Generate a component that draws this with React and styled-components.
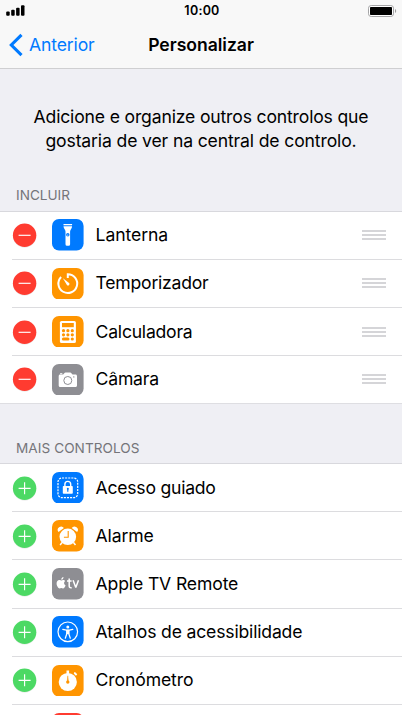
import React from "react";
import styled, { createGlobalStyle } from "styled-components";

const Global = createGlobalStyle`
  * { box-sizing: border-box; }
  html, body { margin: 0; height: 100%; overflow: hidden; background: #efeff4; }
`;

const Screen = styled.main`
  width: 402px;
  height: 715px;
  overflow: hidden;
  background: #efeff4;
  color: #000;
  font-family: Inter, "Liberation Sans", sans-serif;
`;

const Header = styled.header`
  height: 69px;
  background: #f8f8f8;
  border-bottom: 1px solid #cfcfd1;
`;

const StatusBar = styled.div`
  height: 22px;
  display: grid;
  grid-template-columns: 1fr auto 1fr;
  align-items: center;
  padding: 0 5px 0 6px;
`;

const Clock = styled.span`
  padding-left: 1px;
  font-size: 12.5px;
  line-height: 22px;
  font-weight: 600;
  letter-spacing: 0.25px;
`;

const Battery = styled.svg`
  justify-self: end;
`;

const NavBar = styled.nav`
  height: 46px;
  display: grid;
  grid-template-columns: 1fr auto 1fr;
  align-items: center;
  padding: 0 9px;
`;

const BackButton = styled.button`
  display: flex;
  align-items: center;
  gap: 6px;
  padding: 0;
  border: 0;
  background: none;
  color: #007aff;
  font: 400 17.6px/24px Inter, "Liberation Sans", sans-serif;
  letter-spacing: -0.15px;
`;

const Title = styled.h1`
  margin: 0;
  font-size: 17.6px;
  line-height: 24px;
  font-weight: 600;
  letter-spacing: -0.03px;
`;

const Intro = styled.p`
  margin: 0;
  padding-top: 36px;
  height: 111px;
  text-align: center;
  font-size: 17.6px;
  line-height: 23.6px;
`;

const Line = styled.span`
  display: block;
  white-space: nowrap;
  letter-spacing: ${(p) => p.$tracking}px;
`;

const SectionTitle = styled.h2`
  margin: 0;
  height: ${(p) => p.$height}px;
  padding: 0 16px ${(p) => p.$bottom}px;
  display: flex;
  align-items: flex-end;
  color: #75757a;
  font-size: 13.6px;
  line-height: 20px;
  font-weight: 400;
  letter-spacing: ${(p) => p.$tracking}px;
`;

const List = styled.ul`
  margin: 0;
  padding: 0;
  list-style: none;
  background: #fff;
  border-top: 1px solid #d8d8dd;
  border-bottom: 1px solid #dedee2;
`;

const Row = styled.li`
  height: ${(p) => (p.$included ? 48.15 : 48.2)}px;
  padding-left: 12px;

  &:last-child { height: ${(p) => (p.$included ? 46.55 : 48.2)}px; }
  &:last-child > div { border-bottom: 0; }
`;

const RowBody = styled.div`
  height: 100%;
  display: flex;
  align-items: center;
  padding: 0 16px ${(p) => (p.$included ? 0.7 : 0)}px 0;
  border-bottom: 1px solid #dcdcdf;
`;

const Toggle = styled.svg`
  flex: none;
  margin-right: 15.4px;
`;

const Tile = styled.svg`
  flex: none;
  margin-right: 11.6px;
`;

const Label = styled.span`
  flex: 1;
  font-size: 17.6px;
  line-height: 24px;
  letter-spacing: ${(p) => p.$tracking}px;
  white-space: nowrap;
`;

const glyphs = {
  flashlight: (
    <g fill="#fff">
      <path d="M11.5 5h8.6v1.3h-8.6z" />
      <path d="M11.5 7.2h8.6c0 2.2-2 3.2-2 5.3v12.7a1.5 1.5 0 0 1-1.5 1.5H15a1.5 1.5 0 0 1-1.5-1.5V12.5c0-2.1-2-3.1-2-5.3z" />
      <circle cx="15.8" cy="15.7" r="1.7" fill="#007aff" />
      <circle cx="15.8" cy="16" r=".6" />
    </g>
  ),
  timer: (
    <g fill="none" stroke="#fff" strokeWidth="2" strokeLinecap="butt">
      <path d="M15.8 10V6.2a9.4 9.4 0 1 1-6.7 2.8" />
      <path d="M10.9 10.2l6.2 4.9a1.5 1.5 0 0 1-2 2.2z" fill="#fff" stroke="none" />
    </g>
  ),
  calculator: (
    <g>
      <rect x="7.9" y="5" width="16" height="22" rx="1.6" fill="#fff" />
      <g fill="#ff9500">
        <rect x="10" y="7" width="11.8" height="4.2" />
        {[14.7, 18.8].map((y) => [11.5, 15.9, 20.3].map((x) => <circle key={`${x}-${y}`} cx={x} cy={y} r="1.6" />))}
        <rect x="9.9" y="21.5" width="7.6" height="3" rx="1.5" />
        <circle cx="20.3" cy="23" r="1.6" />
      </g>
    </g>
  ),
  camera: (
    <g>
      <path d="M8.2 10.4h3l1.1-1.2c.3-.4.7-.6 1.2-.6h4.7c.5 0 .9.2 1.2.6l1.1 1.2h3c.9 0 1.5.6 1.5 1.5v9.7c0 .9-.6 1.5-1.5 1.5H8.2c-.9 0-1.5-.6-1.5-1.5v-9.7c0-.9.6-1.5 1.5-1.5z" fill="#fff" />
      <path d="M8.1 9.7h2.2" stroke="#fff" strokeWidth="1" />
      <circle cx="15.8" cy="16.5" r="4" fill="none" stroke="#8e8e93" />
      <circle cx="21.8" cy="12.9" r=".7" fill="#8e8e93" />
    </g>
  ),
  guided: (
    <g>
      <rect x="6" y="6" width="19.7" height="19.7" rx="4" fill="none" stroke="#fff" strokeWidth="1.2" strokeDasharray="2.1 1" />
      <rect x="10.8" y="14" width="10" height="7.8" rx=".8" fill="#fff" />
      <path d="M12.9 14.5v-2.2a2.9 2.9 0 0 1 5.8 0v2.2" fill="none" stroke="#fff" strokeWidth="1.4" />
      <path d="M15.8 16.4v3.3" stroke="#007aff" strokeWidth="1.2" />
      <circle cx="15.8" cy="16.8" r="1" fill="#007aff" />
    </g>
  ),
  alarm: (
    <g>
      <path d="M10.1 22.6l-2 2.4m13.4-2.4l2 2.4" stroke="#fff" strokeWidth="1.5" />
      <circle cx="15.8" cy="16.8" r="8.3" fill="#fff" />
      <path d="M6.5 12.1a3.4 3.4 0 1 1 5.4-4.2zM25.1 12.1a3.4 3.4 0 1 0-5.4-4.2z" fill="#fff" />
      <path d="M16.2 11.1v6.2h-4.3" fill="none" stroke="#ff9500" strokeWidth="1.1" />
    </g>
  ),
  tv: (
    <g fill="#fff">
      <path d="M9.4 12.4c.8-.4 1.6-.7 2.5-.3.6.2 1 .6 1.3 1-1.8 1.2-1.4 3.5.4 4.3-.5 1.4-1.5 3.1-2.6 3.1-.6 0-1-.4-1.7-.4s-1.1.4-1.7.4c-1.3 0-3-2.5-3-4.9 0-2.7 1.7-4 3.3-3.5.6.1 1 .4 1.5.3z" />
      <path d="M9.2 11.8c-.1-1.4 1-2.6 2.3-2.8.1 1.5-.9 2.8-2.3 2.8z" />
      <path d="M17.2 10.4v7.5c0 1.5.7 2.1 2.5 1.8M15 12.9h4.6M21.1 12.3l2.7 7.3 2.7-7.3" fill="none" stroke="#fff" strokeWidth="1.5" strokeLinejoin="bevel" />
    </g>
  ),
  accessibility: (
    <g fill="none" stroke="#fff">
      <circle cx="15.8" cy="15.8" r="9.8" strokeWidth="1.2" />
      <circle cx="15.8" cy="10.9" r="1.5" fill="#fff" stroke="none" />
      <path d="M10.8 13.4l3.5.7h3l3.5-.7M14.8 14.2v3.5l-1.5 4.5M16.8 14.2v3.5l1.5 4.5" strokeWidth="1.25" strokeLinecap="round" strokeLinejoin="round" />
      <path d="M14.3 13.8h3v4.3h-3z" fill="#fff" stroke="none" />
    </g>
  ),
  stopwatch: (
    <g>
      <circle cx="15.8" cy="17" r="9.1" fill="#fff" />
      <path d="M14.5 5.5h2.6v4h-2.6zM21.7 8.5l1-1 2.2 2.2-1 1z" fill="#fff" />
      <path d="M22.4 7.5l2.3 2.3" stroke="#fff" strokeWidth="1.6" />
      <path d="M15.8 10.8l.6 5.2h-1.2z" fill="#ff9500" stroke="#ff9500" strokeWidth=".4" />
      <circle cx="15.8" cy="17.1" r="1.7" fill="#ff9500" />
    </g>
  ),
};

const included = [
  { label: "Lanterna", icon: "flashlight", color: "#007aff", tracking: -0.1 },
  { label: "Temporizador", icon: "timer", color: "#ff9500", tracking: -0.23 },
  { label: "Calculadora", icon: "calculator", color: "#ff9500", tracking: -0.23 },
  { label: "Câmara", icon: "camera", color: "#8e8e93", tracking: -0.2 },
];

const more = [
  { label: "Acesso guiado", icon: "guided", color: "#007aff", tracking: -0.24 },
  { label: "Alarme", icon: "alarm", color: "#ff9500", tracking: -0.14 },
  { label: "Apple TV Remote", icon: "tv", color: "#8e8e93", tracking: -0.14 },
  { label: "Atalhos de acessibilidade", icon: "accessibility", color: "#007aff", tracking: -0.18 },
  { label: "Cronómetro", icon: "stopwatch", color: "#ff9500", tracking: -0.12 },
  { label: "", icon: null, color: "#ff3b30", tracking: 0 },
];

function ControlRow({ item, added }) {
  return (
    <Row $included={added}>
      <RowBody $included={added}>
        <Toggle width="25" height="28" viewBox="0 0 25 28">
          <circle cx="12.6" cy="15.1" r="11.7" fill="#000" opacity=".08" />
          <circle cx="12.6" cy="14.3" r="11.7" fill={added ? "#ff3b30" : "#4cd964"} />
          <path d={added ? "M6.6 14.3h12" : "M6.6 14.3h12M12.6 8.3v12"} stroke="#fff" strokeWidth="1.15" />
        </Toggle>
        <Tile width="31.6" height="31.6" viewBox="0 0 31.6 31.6">
          <rect width="31.6" height="31.6" rx="7" fill={item.color} />
          {item.icon && glyphs[item.icon]}
        </Tile>
        <Label $tracking={item.tracking}>{item.label}</Label>
        {added && (
          <svg width="24" height="12" viewBox="0 0 24 12">
            <path d="M0 2h24M0 6h24M0 10h24" stroke="#c8c7cc" strokeWidth="1.6" />
          </svg>
        )}
      </RowBody>
    </Row>
  );
}

export default function App() {
  return (
    <>
      <Global />
      <Screen>
        <Header>
          <StatusBar>
            <svg width="19" height="12" viewBox="0 0 19 12">
              <rect x="0.2" y="6.5" width="3.5" height="4.3" rx="1" />
              <rect x="5.2" y="4.8" width="3.5" height="6" rx="1" />
              <rect x="10.1" y="2.7" width="3.5" height="8.1" rx="1" />
              <rect x="15" y="0.3" width="3.5" height="10.5" rx="1" />
            </svg>
            <Clock>10:00</Clock>
            <Battery width="29" height="12" viewBox="0 0 29 12">
              <rect x=".5" y=".5" width="25" height="11" rx="2.7" fill="#fff" stroke="#a5a5a7" />
              <rect x="2" y="2" width="22" height="8" rx=".8" />
              <path d="M27 4c1.6.6 1.6 3.4 0 4z" fill="#9c9c9e" />
            </Battery>
          </StatusBar>
          <NavBar>
            <BackButton>
              <svg width="14" height="24" viewBox="0 0 14 24">
                <path d="M12.5 1.8L2.3 12l10.2 10.2" fill="none" stroke="#007aff" strokeWidth="3.1" />
              </svg>
              Anterior
            </BackButton>
            <Title>Personalizar</Title>
          </NavBar>
        </Header>
        <Intro>
          <Line $tracking={-0.17}>Adicione e organize outros controlos que</Line>
          <Line $tracking={-0.14}>gostaria de ver na central de controlo.</Line>
        </Intro>
        <SectionTitle $height={31} $bottom={6} $tracking={0}>INCLUIR</SectionTitle>
        <List>{included.map((item) => <ControlRow key={item.label} item={item} added />)}</List>
        <SectionTitle $height={59} $bottom={5} $tracking={0.06}>MAIS CONTROLOS</SectionTitle>
        <List>{more.map((item) => <ControlRow key={item.label} item={item} />)}</List>
      </Screen>
    </>
  );
}
